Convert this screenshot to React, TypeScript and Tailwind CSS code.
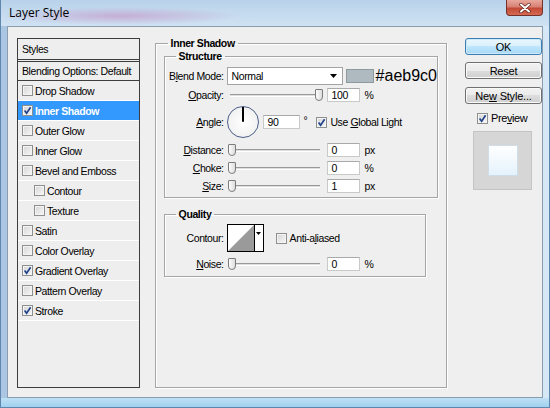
import React from 'react';

function Check({ checked }: { checked?: boolean }) {
    return (
        <span className="w-[11px] h-[11px] shrink-0 border border-[#8e8f8f] bg-[linear-gradient(135deg,#d6d6d6,#f7f7f7)] shadow-[inset_0_0_0_1px_#f4f4f4] flex items-center justify-center">
            {checked && (
                <svg viewBox="0 0 9 9" className="w-[9px] h-[9px]">
                    <path d="M1.6 4.6 L3.6 7.2 L7.6 1.2" stroke="#22448a" strokeWidth="1.7" fill="none" />
                </svg>
            )}
        </span>
    );
}

function Slider({ end }: { end?: boolean }) {
    return (
        <div className="relative w-[96px] h-[14px] flex items-center px-[3px]">
            <div className="w-full h-[3px] bg-[#dedede] border-t border-[#999] border-b border-b-white" />
            <div className={`absolute top-[1px] ${end ? 'left-[88px]' : 'left-[1px]'} w-[8px] h-[12px] rounded-b-[4px] rounded-t-[1px] border border-[#7b7b7b] bg-[linear-gradient(90deg,#fdfdfd,#dcdcdc)]`} />
        </div>
    );
}

function Input({ value, w = 'w-[33px]' }: { value: string; w?: string }) {
    return (
        <div className={`${w} h-[14px] bg-white border border-[#c9c9c9] border-t-[#a9a9a9] pl-[4px] flex items-center`}>{value}</div>
    );
}

function SliderRow({ label, value, unit, end }: { label: React.ReactNode; value: string; unit: string; end?: boolean }) {
    return (
        <div className="flex items-center h-[14px]">
            <div className="w-[59px] text-right">{label}</div>
            <div className="ml-[3px]"><Slider end={end} /></div>
            <div className="ml-[4px]"><Input value={value} /></div>
            <div className="ml-[5px]">{unit}</div>
        </div>
    );
}

function ListRow({ label, checked, indent, selected }: { label: string; checked?: boolean; indent?: boolean; selected?: boolean }) {
    return (
        <div className={`h-[20px] flex items-center gap-[2px] border-b border-white ${indent ? 'pl-[16px]' : 'pl-[4px]'} ${selected ? 'bg-[#3399ff] text-white font-bold' : ''}`}>
            <Check checked={checked} />
            <span>{label}</span>
        </div>
    );
}

function Btn({ children, primary }: { children: React.ReactNode; primary?: boolean }) {
    return (
        <div className={`w-[77px] h-[17px] rounded-[3px] border flex items-center justify-center text-[11px] tracking-[-0.2px] ${primary ? 'border-[#3c7fb1] bg-[linear-gradient(#eaf6fd,#d9f0fc_50%,#bee6fd_50%,#a7d9f5)] shadow-[inset_0_0_0_1px_#cbe9fb]' : 'border-[#707070] bg-[linear-gradient(#f2f2f2,#ebebeb_50%,#dddddd_50%,#cfcfcf)] shadow-[inset_0_0_0_1px_#fafafa]'}`}>
            {children}
        </div>
    );
}

const u = (c: string) => <span className="underline underline-offset-[1px] decoration-[1px]">{c}</span>;

export default function App() {
    const rows = [
        { label: 'Drop Shadow' },
        { label: 'Inner Shadow', checked: true, selected: true },
        { label: 'Outer Glow' },
        { label: 'Inner Glow' },
        { label: 'Bevel and Emboss' },
        { label: 'Contour', indent: true },
        { label: 'Texture', indent: true },
        { label: 'Satin' },
        { label: 'Color Overlay' },
        { label: 'Gradient Overlay', checked: true },
        { label: 'Pattern Overlay' },
        { label: 'Stroke', checked: true },
    ];

    return (
        <div className="w-[550px] h-[408px] flex flex-col overflow-hidden bg-[linear-gradient(90deg,#aac6e2,#c4dbf0_40%,#d6e8f6)] border-x border-b border-[#5f86ad] font-['Liberation_Sans',Arial,sans-serif] text-[10.5px] tracking-[-0.4px] text-black leading-[12px]">
            <div className="h-[26px] shrink-0 flex items-start justify-between pl-[8px] pr-[6px] bg-[radial-gradient(ellipse_120px_9px_at_120px_16px,rgba(196,120,180,0.45),transparent),linear-gradient(180deg,#b9d2ea,#cfe2f3)]">
                <span className="mt-[6px] text-[12px] tracking-normal font-['Open_Sans',sans-serif] leading-[14px]">Layer Style</span>
                <div className="w-[37px] h-[16px] rounded-b-[4px] border border-t-0 border-[#74302a] bg-[linear-gradient(#e9a89d,#d88174_45%,#c24835_55%,#d56a52)] flex items-center justify-center">
                    <svg viewBox="0 0 12 10" className="w-[12px] h-[10px]">
                        <path d="M2 1.5 L10 8.5 M10 1.5 L2 8.5" stroke="#5a1f18" strokeWidth="3.4" strokeLinecap="round" />
                        <path d="M2 1.5 L10 8.5 M10 1.5 L2 8.5" stroke="#fff" strokeWidth="2" strokeLinecap="round" />
                    </svg>
                </div>
            </div>

            <div className="mx-[6px] h-[372px] shrink-0 bg-[#efefef] border border-[#8a9db0] flex items-start pl-[9px] pt-[10px]">
                {/* styles list */}
                <div className="mt-[1px] w-[126px] h-[350px] border border-[#3d3d3d] bg-[#eeeeee] flex flex-col">
                    <div className="h-[21px] flex items-center pl-[4px] border-b border-[#3d3d3d]">Styles</div>
                    <div className="h-[20px] mt-[1px] flex items-center pl-[4px] border-y border-[#3d3d3d]">Blending Options: Default</div>
                    {rows.map((r) => (
                        <ListRow key={r.label} {...r} />
                    ))}
                </div>

                {/* inner shadow group */}
                <fieldset className="ml-[15px] w-[279px] h-[351px] border border-[#a5a5a5] shadow-[1px_1px_0_#fff,inset_1px_1px_0_#fff] p-0 m-0">
                    <legend className="ml-[12px] px-[3px] font-bold">Inner Shadow</legend>
                    <div className="px-[8px] pt-[1px]">
                        <fieldset className="w-[262px] border border-[#a5a5a5] shadow-[1px_1px_0_#fff,inset_1px_1px_0_#fff] p-0 m-0">
                            <legend className="ml-[11px] px-[3px] font-bold">Structure</legend>
                            <div className="flex flex-col pb-[4px]">
                                <div className="mt-[5px] flex items-center h-[18px]">
                                    <div className="w-[59px] text-right">B{u('l')}end Mode:</div>
                                    <div className="ml-[3px] w-[116px] h-[18px] bg-white border border-[#a4a4a4] flex items-center justify-between pl-[4px] pr-[5px]">
                                        <span>Normal</span>
                                        <svg viewBox="0 0 7 4" className="w-[7px] h-[4px]"><path d="M0 0 H7 L3.5 4 Z" fill="#000" /></svg>
                                    </div>
                                    <div className="ml-[3px] w-[28px] h-[14px] bg-[#aeb9c0] border border-[#8d989f]" />
                                    <span className="ml-[2px] text-[16px] leading-[16px] tracking-normal whitespace-nowrap">#aeb9c0</span>
                                </div>
                                <div className="mt-[3px]">
                                    <SliderRow label={<>{u('O')}pacity:</>} value="100" unit="%" end />
                                </div>
                                <div className="mt-[4px] flex items-center h-[32px]">
                                    <div className="w-[59px] text-right">{u('A')}ngle:</div>
                                    <div className="ml-[3px] w-[32px] h-[32px] rounded-full border-[1.5px] border-[#4b5f88] bg-[radial-gradient(circle,#ffffff,#ececec)] flex justify-center">
                                        <div className="w-[2px] h-[15px] bg-black rounded-b-full" />
                                    </div>
                                    <div className="ml-[4px]"><Input value="90" w="w-[37px]" /></div>
                                    <span className="ml-[4px] mb-[4px]">°</span>
                                    <div className="ml-[9px] flex items-center gap-[3px]">
                                        <Check checked />
                                        <span>Use {u('G')}lobal Light</span>
                                    </div>
                                </div>
                                <div className="mt-[5px]">
                                    <SliderRow label={<>{u('D')}istance:</>} value="0" unit="px" />
                                </div>
                                <div className="mt-[4px]">
                                    <SliderRow label={<>{u('C')}hoke:</>} value="0" unit="%" />
                                </div>
                                <div className="mt-[4px]">
                                    <SliderRow label={<>{u('S')}ize:</>} value="1" unit="px" />
                                </div>
                            </div>
                        </fieldset>

                        <fieldset className="mt-[10px] w-[262px] border border-[#a5a5a5] shadow-[1px_1px_0_#fff,inset_1px_1px_0_#fff] p-0 m-0">
                            <legend className="ml-[11px] px-[3px] font-bold">Quality</legend>
                            <div className="flex flex-col pb-[5px]">
                                <div className="mt-[4px] flex items-center h-[28px]">
                                    <div className="w-[59px] text-right">Contour:</div>
                                    <div className="ml-[3px] w-[37px] h-[28px] border border-black bg-white flex">
                                        <svg viewBox="0 0 26 26" className="w-[26px] h-[26px]" preserveAspectRatio="none">
                                            <path d="M0 26 L26 0 V26 Z" fill="#9a9a9a" />
                                        </svg>
                                        <div className="flex-1 border-l border-black flex justify-center pt-[7px]">
                                            <svg viewBox="0 0 5 3" className="w-[5px] h-[3px]"><path d="M0 0 H5 L2.5 3 Z" fill="#000" /></svg>
                                        </div>
                                    </div>
                                    <div className="ml-[12px] flex items-center gap-[3px]">
                                        <Check />
                                        <span>Anti-a{u('l')}iased</span>
                                    </div>
                                </div>
                                <div className="mt-[5px]">
                                    <SliderRow label={<>{u('N')}oise:</>} value="0" unit="%" />
                                </div>
                            </div>
                        </fieldset>
                    </div>
                </fieldset>

                {/* buttons */}
                <div className="ml-[18px] mt-[1px] w-[77px] flex flex-col">
                    <Btn primary>OK</Btn>
                    <div className="mt-[7px]"><Btn>Reset</Btn></div>
                    <div className="mt-[8px]"><Btn>Ne{u('w')}{'\u00a0'}Style...</Btn></div>
                    <div className="mt-[8px] ml-[12px] h-[12px] flex items-center gap-[3px] text-[11px]">
                        <Check checked />
                        <span>Pre{u('v')}iew</span>
                    </div>
                    <div className="mt-[7px] ml-[8px] w-[59px] h-[59px] border border-[#c4c4c4] bg-[#d6d6d6] flex items-center justify-center">
                        <div className="w-[30px] h-[31px] border border-[#cfdde9] bg-[linear-gradient(180deg,#ffffff,#e4f2fc)]" />
                    </div>
                </div>
            </div>
            <div className="flex-1 bg-[linear-gradient(180deg,#bfe0f4,#9fd1ee)]" />
        </div>
    );
}
